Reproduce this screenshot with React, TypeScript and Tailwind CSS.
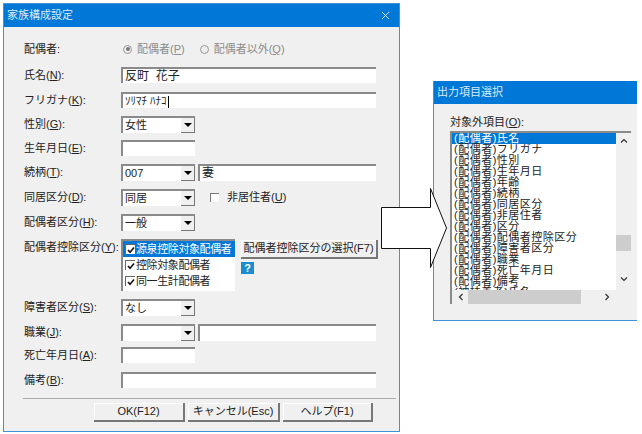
import type { ReactNode } from "react";
import { X } from "lucide-react";

const FONT = "font-['Liberation_Sans','Noto_Sans_CJK_JP',sans-serif]";

const OUTPUT_ITEMS = [
  "(配偶者)氏名",
  "(配偶者)フリガナ",
  "(配偶者)性別",
  "(配偶者)生年月日",
  "(配偶者)年齢",
  "(配偶者)続柄",
  "(配偶者)同居区分",
  "(配偶者)非居住者",
  "(配偶者)区分",
  "(配偶者)配偶者控除区分",
  "(配偶者)障害者区分",
  "(配偶者)職業",
  "(配偶者)死亡年月日",
  "(配偶者)備考",
  "(被扶養者)氏名",
];

function Field({ className, children }: { className: string; children?: ReactNode }) {
  return (
    <div className={`h-[16px] shrink-0 overflow-hidden border-t-2 border-l-2 border-t-[#8a8a8a] border-l-[#8a8a8a] bg-white pl-[2px] text-[12px] leading-[15px] text-[#222] ${className}`}>
      {children}
    </div>
  );
}

function Select({ value }: { value?: string }) {
  return (
    <div className="relative h-[17px] w-[74px] shrink-0 border-t-2 border-l-2 border-t-[#8a8a8a] border-l-[#8a8a8a] bg-white pl-[2px] text-[11px] leading-[15px] text-[#222]">
      {value}
      <div className="absolute top-0 right-0 bottom-0 flex w-[14px] items-center justify-center border-r border-b border-r-[#777] border-b-[#777] bg-[#f0f0f0]">
        <div className="h-0 w-0 border-x-[4px] border-t-[4px] border-x-transparent border-t-black" />
      </div>
    </div>
  );
}

function Label({ children }: { children: ReactNode }) {
  return <div className="w-[97px] shrink-0 text-[11px] leading-[16px] whitespace-nowrap text-[#222]">{children}</div>;
}

function Row({ label, height, children }: { label: ReactNode; height: string; children?: ReactNode }) {
  return (
    <div className={`flex items-start ${height}`}>
      <Label>{label}</Label>
      {children}
    </div>
  );
}

function Key({ children }: { children: string }) {
  return <span className="underline">{children}</span>;
}

function Radio({ checked, children }: { checked?: boolean; children: ReactNode }) {
  return (
    <div className="flex items-center gap-[5px] text-[11px] leading-[16px] text-[#8c8c8c]">
      <div className="flex h-[9px] w-[9px] items-center justify-center rounded-full border border-[#999] bg-[#eee]">
        {checked && <div className="h-[4px] w-[4px] rounded-full bg-[#777]" />}
      </div>
      <span>{children}</span>
    </div>
  );
}

function CheckMark() {
  return (
    <div className="flex h-[10px] w-[10px] shrink-0 items-center justify-center border-t border-l border-[#666] bg-white">
      <svg width="8" height="8" viewBox="0 0 8 8">
        <path d="M1 4l2 2.2L7 1.6" fill="none" stroke="#111" strokeWidth="1.6" />
      </svg>
    </div>
  );
}

function PushButton({ className, children }: { className: string; children: ReactNode }) {
  return (
    <div className={`flex items-center justify-center border-r-2 border-b-2 border-r-[#777] border-b-[#777] bg-[#f0f0f0] text-[11px] whitespace-nowrap text-[#222] shadow-[inset_1px_1px_0_#fff] ${className}`}>
      {children}
    </div>
  );
}

function ScrollArrow({ d }: { d: string }) {
  return (
    <svg width="8" height="8" viewBox="0 0 8 8">
      <path d={d} fill="none" stroke="#333" strokeWidth="1.2" />
    </svg>
  );
}

function FamilyDialog() {
  return (
    <div className="absolute top-[3px] left-[3px] flex h-[429px] w-[397px] flex-col border border-[#3f93d8] bg-[#f0f0f0]">
      <div className="flex h-[23px] shrink-0 items-center justify-between bg-[#0078d7] pr-[7px] pl-[3px] text-[11px] text-[#dcebf8]">
        <span>家族構成設定</span>
        <X size={13} strokeWidth={1.5} className="text-white" />
      </div>
      <div className="flex flex-col pt-[14px] pl-[20px]">
        <Row label="配偶者:" height="h-[26px]">
          <div className="flex gap-[15px] pl-[2px]">
            <Radio checked>配偶者(<Key>P</Key>)</Radio>
            <Radio>配偶者以外(<Key>Q</Key>)</Radio>
          </div>
        </Row>
        <Row label={<>氏名(<Key>N</Key>):</>} height="h-[25px]">
          <Field className="w-[255px]">反町&nbsp;&nbsp;花子</Field>
        </Row>
        <Row label={<>フリガナ(<Key>K</Key>):</>} height="h-[24px]">
          <Field className="w-[255px]">
            <span className="text-[11px]">ｿﾘﾏﾁ ﾊﾅｺ</span>
            <span className="ml-px inline-block h-[12px] w-px bg-black align-middle" />
          </Field>
        </Row>
        <Row label={<>性別(<Key>G</Key>):</>} height="h-[24px]">
          <Select value="女性" />
        </Row>
        <Row label={<>生年月日(<Key>E</Key>):</>} height="h-[24px]">
          <Field className="w-[74px]" />
        </Row>
        <Row label={<>続柄(<Key>T</Key>):</>} height="h-[25px]">
          <Select value="007" />
          <Field className="ml-[3px] h-[17px] w-[178px]">妻</Field>
        </Row>
        <Row label={<>同居区分(<Key>D</Key>):</>} height="h-[25px]">
          <Select value="同居" />
          <div className="ml-[15px] flex items-center gap-[8px] text-[11px] leading-[16px] text-[#222]">
            <div className="h-[9px] w-[9px] border-t border-l border-[#777] bg-white" />
            <span>非居住者(<Key>U</Key>)</span>
          </div>
        </Row>
        <Row label={<>配偶者区分(<Key>H</Key>):</>} height="h-[25px]">
          <Select value="一般" />
        </Row>
        <Row label={<>配偶者控除区分(<Key>Y</Key>):</>} height="h-[60px]">
          <div className="h-[52px] w-[114px] shrink-0 border-t-2 border-l-2 border-t-[#8a8a8a] border-l-[#8a8a8a] bg-white text-[11px] leading-[16px] tracking-[-0.4px] whitespace-nowrap text-[#222]">
            <div className="flex h-[16px] items-center gap-px bg-[#0078d7] pl-[2px] text-white">
              <CheckMark />
              <span>源泉控除対象配偶者</span>
            </div>
            <div className="flex h-[16px] items-center gap-px pl-[2px]">
              <CheckMark />
              <span>控除対象配偶者</span>
            </div>
            <div className="flex h-[16px] items-center gap-px pl-[2px]">
              <CheckMark />
              <span>同一生計配偶者</span>
            </div>
          </div>
          <div className="ml-[6px] flex flex-col items-start gap-[3px] pt-[1px]">
            <PushButton className="h-[19px] w-[137px]">配偶者控除区分の選択(F7)</PushButton>
            <div className="flex h-[12px] w-[13px] items-center justify-center bg-[#1b8ccf] text-[11px] leading-none font-bold text-white">?</div>
          </div>
        </Row>
        <Row label={<>障害者区分(<Key>S</Key>):</>} height="h-[25px]">
          <Select value="なし" />
        </Row>
        <Row label={<>職業(<Key>J</Key>):</>} height="h-[23px]">
          <Select />
          <Field className="ml-[3px] h-[17px] w-[178px]" />
        </Row>
        <Row label={<>死亡年月日(<Key>A</Key>):</>} height="h-[25px]">
          <Field className="w-[74px]" />
        </Row>
        <Row label={<>備考(<Key>B</Key>):</>} height="h-[26px]">
          <Field className="w-[255px]" />
        </Row>
      </div>
      <div className="mr-[3px] ml-[19px] h-px bg-[#aaa]" />
      <div className="flex gap-[3px] pt-[4px] pl-[90px]">
        <PushButton className="h-[19px] w-[91px]">OK(F12)</PushButton>
        <PushButton className="h-[19px] w-[92px]">キャンセル(Esc)</PushButton>
        <PushButton className="h-[19px] w-[90px]">ヘルプ(F1)</PushButton>
      </div>
    </div>
  );
}

function OutputDialog() {
  return (
    <div className="absolute top-[81px] left-[433px] flex h-[240px] w-[204px] flex-col border-b border-l border-[#3f93d8] bg-[#f0f0f0]">
      <div className="flex h-[23px] shrink-0 items-center bg-[#0078d7] pl-[3px] text-[11px] text-[#dcebf8]">出力項目選択</div>
      <div className="flex flex-col pt-[10px] pl-[16px]">
        <div className="h-[17px] text-[11px] leading-[16px] text-[#222]">対象外項目(<Key>O</Key>):</div>
        <div className="flex h-[173px] w-[181px] flex-col border-t-2 border-l-2 border-t-[#8a8a8a] border-l-[#8a8a8a] bg-white">
          <div className="flex h-[157px] min-h-0 shrink-0">
            <div className="h-[157px] w-[164px] overflow-hidden text-[11px] leading-[11px] tracking-[0.5px] text-[#222]">
              {OUTPUT_ITEMS.map((item, i) => (
                <div key={item} className={`h-[11px] pl-[2px] whitespace-nowrap ${i === 0 ? "bg-[#0078d7] text-white" : ""}`}>
                  {item}
                </div>
              ))}
            </div>
            <div className="flex w-[15px] flex-col items-center bg-[#f0f0f0] pt-[4px]">
              <ScrollArrow d="M1 5.5L4 2.5L7 5.5" />
              <div className="mt-[90px] h-[16px] w-[15px] bg-[#cdcdcd]" />
              <div className="mt-[24px]">
                <ScrollArrow d="M1 2.5L4 5.5L7 2.5" />
              </div>
            </div>
          </div>
          <div className="flex h-[14px] items-center bg-[#f0f0f0] pr-[20px] pl-[5px]">
            <ScrollArrow d="M5.5 1L2.5 4L5.5 7" />
            <div className="ml-[3px] h-[14px] w-[113px] bg-[#cdcdcd]" />
            <div className="ml-auto">
              <ScrollArrow d="M2.5 1L5.5 4L2.5 7" />
            </div>
          </div>
        </div>
      </div>
    </div>
  );
}

export default function App() {
  return (
    <div className={`relative h-[434px] w-[642px] overflow-hidden bg-white ${FONT}`}>
      <FamilyDialog />
      <OutputDialog />
      <svg className="absolute top-[185px] left-[379px]" width="72" height="86" viewBox="0 0 72 86">
        <path d="M2.5 22.5H51.5V3.5L67.5 43L51.5 82.5V63.5H2.5Z" fill="#fff" stroke="#111" strokeWidth="1" />
      </svg>
    </div>
  );
}
